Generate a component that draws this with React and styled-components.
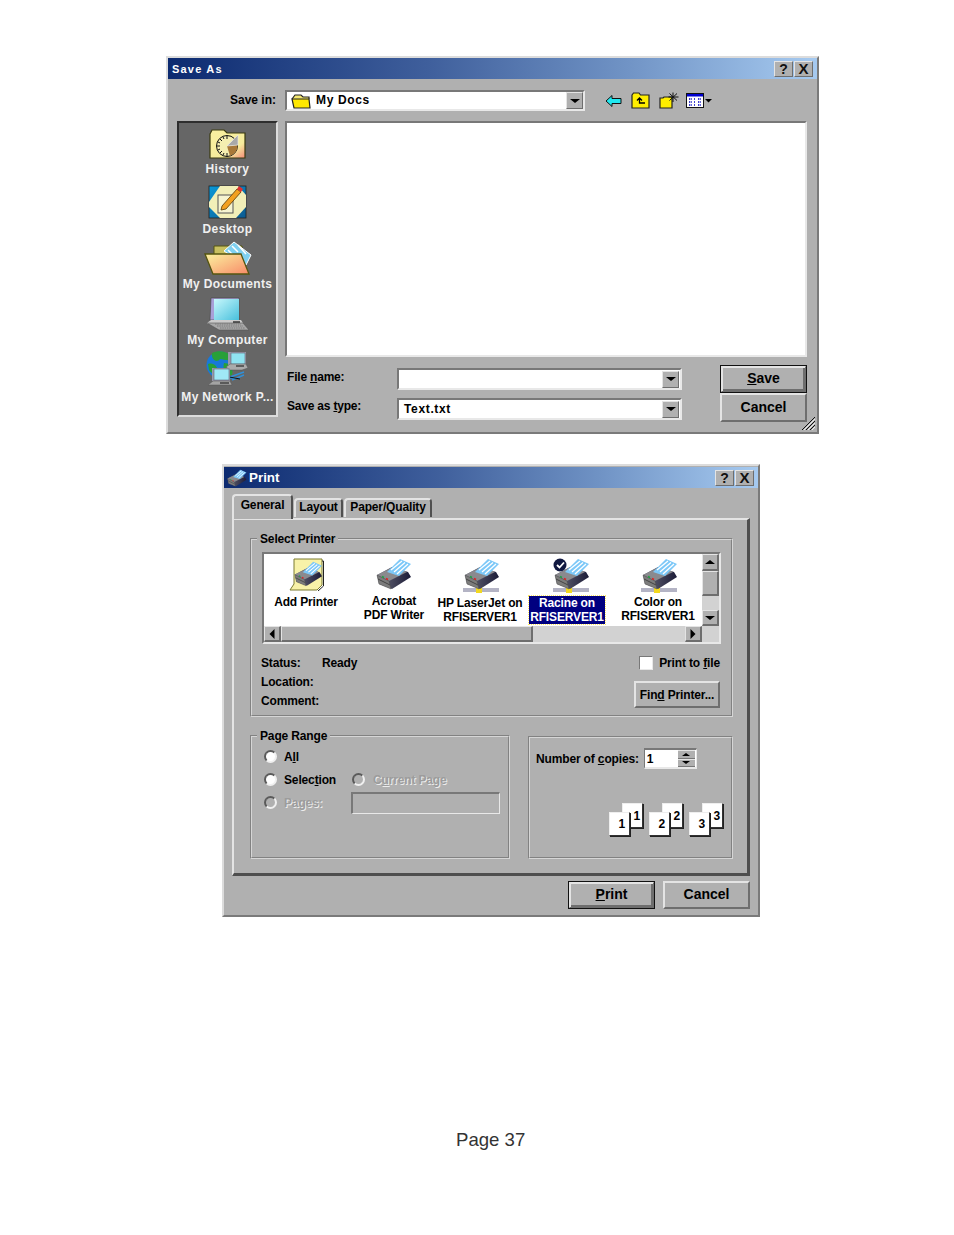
import React from "react";
import styled, { createGlobalStyle } from "styled-components";

const Global = createGlobalStyle`
  html, body { margin: 0; padding: 0; background: #fff; }
  body { font-family: "Liberation Sans", Arial, sans-serif; color: #000; }
`;

const FACE = "#b0b0b0";
const raised = `border-style: solid; border-color: #e4e4e4 #6e6e6e #6e6e6e #e4e4e4;`;
const sunken = `border-style: solid; border-color: #787878 #e8e8e8 #e8e8e8 #787878;`;

const Page = styled.div`
  width: 954px; height: 1235px; padding-top: 56px; box-sizing: border-box;
  display: flex; flex-direction: column; align-items: flex-start;
`;
const Dialog = styled.section`
  position: relative; box-sizing: border-box; flex: none;
  width: ${p => p.$w}px; height: ${p => p.$h}px;
  margin-left: ${p => p.$left}px; margin-top: ${p => p.$top || 0}px;
  background: ${FACE}; border-width: 2px; ${raised}
  border-color: #dcdcdc #7a7a7a #7a7a7a #dcdcdc;
  display: flex; flex-direction: column;
`;
const TitleBar = styled.header`
  height: 21px; flex: none; display: flex; align-items: center; margin-top: ${p => p.$mt || 0}px;
  background: linear-gradient(90deg, #0c2a70 0%, #3f5f9c 40%, #6f92c4 70%, #a6caf0 100%);
  color: #fff; font-weight: bold; padding: 0 4px 0 ${p => p.$pl}px;
`;
const Caption = styled.h1`
  margin: 0; flex: 1; color: #fff; font-weight: bold;
  font-size: ${p => p.$size}px; letter-spacing: ${p => p.$track}px;
`;
const WinBtn = styled.span`
  box-sizing: border-box; width: 19px; height: 16px; margin-left: 1px; border-width: 1px; ${raised}
  background: ${FACE}; color: #111; display: flex; align-items: center; justify-content: center;
  font-size: ${p => p.$size || 14}px; font-weight: bold; line-height: 1;
`;
const SaveBody = styled.div`
  flex: 1; padding: 11px 9px 0 9px; display: flex; flex-direction: column; gap: 10px;
  font-size: 12px; font-weight: bold; letter-spacing: .65px;
`;
const LookRow = styled.div`
  display: flex; align-items: center; height: 21px;
`;
const LookLabel = styled.label`
  width: 99px; text-align: right; margin-right: 9px; padding-bottom: 2px;
  letter-spacing: 0;
`;
const Combo = styled.div`
  box-sizing: border-box; width: ${p => p.$w}px; height: ${p => p.$h}px; border-width: 2px; ${sunken}
  background: #fff; display: flex; align-items: center; padding: 0 ${p => p.$pr || 0}px 0 ${p => p.$pl}px; gap: 5px;
`;
const ComboText = styled.span`flex: 1; padding-bottom: ${p => p.$nudge || 0}px;`;
const ArrowBtn = styled.span`
  box-sizing: border-box; width: 17px; height: 17px; border-width: 1px; flex: none; ${raised}
  background: ${FACE}; display: flex; align-items: center; justify-content: center;
`;
const Tri = styled.i`
  display: block; width: 0; height: 0;
  border-left: ${p => p.$s}px solid transparent; border-right: ${p => p.$s}px solid transparent;
  ${p => p.$up ? `border-bottom: ${p.$s - 1}px solid #000;` : `border-top: ${p.$s - 1}px solid #000;`}
`;
const ToolStrip = styled.div`
  display: flex; align-items: center; margin-left: 20px; height: 18px;
`;
const Tool = styled.svg`display: block; margin-right: ${p => p.$mr || 0}px;`;
const MainRow = styled.div`display: flex; gap: 7px;`;
const Places = styled.nav`
  box-sizing: border-box; width: 101px; height: 296px; flex: none; padding-top: 6px;
  background: #666; border-width: 2px; border-style: solid;
  border-color: #2e2e2e #dcdcdc #dcdcdc #2e2e2e;
  display: flex; flex-direction: column; align-items: center;
`;
const Place = styled.div`
  display: flex; flex-direction: column; align-items: center;
  margin-top: ${p => p.$mt || 0}px; color: #f0f0f0; line-height: 14px; white-space: nowrap;
  letter-spacing: .35px;
  svg { display: block; flex: none; margin-bottom: ${p => p.$lift || 2}px; }
`;
const FileColumn = styled.div`flex: 1; display: flex; flex-direction: column;`;
const FileList = styled.div`
  box-sizing: border-box; width: 522px; height: 236px; background: #fff; border-width: 2px; ${sunken}
`;
const FormRow = styled.div`display: flex; margin-top: 8px;`;
const FormFields = styled.div`
  display: grid; grid-template-columns: 110px 285px; grid-auto-rows: 22px; row-gap: 8px;
  padding: 3px 0 0 2px; align-items: center; letter-spacing: -.2px;
  margin-right: 38px;
`;
const FieldLabel = styled.label`position: relative; top: ${p => p.$up || -2}px;`;
const FormButtons = styled.div`display: flex; flex-direction: column;`;
const PushBtn = styled.button`
  box-sizing: border-box; width: 87px; height: ${p => p.$h || 28}px; background: ${FACE};
  font: bold 14px "Liberation Sans", Arial, sans-serif; color: #000; padding: 0 0 2px; letter-spacing: 0;
  border-width: 2px; ${raised}
  ${p => p.$def && `outline: 1px solid #111; outline-offset: -1px; box-shadow: inset 1px 1px #e4e4e4, inset -2px -2px #6e6e6e;`}
`;
const SmallBtn = styled(PushBtn)`
  font-size: 12px; height: 27px; width: 86px; letter-spacing: -.15px; padding: 0;
`;
const Grip = styled.svg`position: absolute; right: 1px; bottom: 1px; display: block;`;

/* Print dialog */
const TabStrip = styled.div`
  display: flex; align-items: flex-end; height: 30px; padding-left: 8px; flex: none;
  font-size: 12px; font-weight: bold; letter-spacing: -.15px;
`;
const Tab = styled.div`
  box-sizing: border-box; position: relative; height: ${p => p.$on ? 25 : 19}px; width: ${p => p.$w}px;
  margin: 0 1px ${p => p.$on ? -1 : 1}px 0; background: ${FACE}; z-index: ${p => p.$on ? 2 : 1};
  border-width: 2px 2px 0 2px; border-style: solid;
  border-color: #e4e4e4 #505050 #e4e4e4 #e4e4e4; border-radius: 4px 4px 0 0;
  display: flex; align-items: center; justify-content: center;
  padding-bottom: ${p => p.$on ? 6 : 3}px;
`;
const Panel = styled.div`
  box-sizing: border-box; margin: 0 8px; height: 358px; border-style: solid; flex: none;
  border-width: 2px 3px 3px 2px; border-color: #e4e4e4 #4e4e4e #4e4e4e #e4e4e4;
  padding: 12px 14px 0 16px; font-size: 12px; font-weight: bold; letter-spacing: -.15px;
`;
const Group = styled.fieldset`
  box-sizing: border-box; margin: 0; padding: 0; min-width: 0; height: ${p => p.$h}px;
  border: 2px groove #d6d6d6;
`;
const Legend = styled.legend`
  margin-left: 5px; padding: 0 3px; font-size: 12px; line-height: 14px;
`;
const PrinterList = styled.div`
  box-sizing: border-box; width: 459px; height: 92px; margin: 6px 0 0 10px;
  border-width: 2px; ${sunken}; background: #fff;
  display: grid; grid-template-columns: 438px 17px; grid-template-rows: 72px 16px;
`;
const Printers = styled.div`display: flex; overflow: hidden;`;
const PrinterItem = styled.div`
  width: ${p => p.$w}px; flex: none; display: flex; flex-direction: column; align-items: center;
  padding-top: 4px; text-align: center; line-height: 14px; white-space: nowrap;
  svg { display: block; flex: none; margin: 0 0 ${p => p.$gap}px ${p => p.$shift || 0}px; }
`;
const Selected = styled.span`
  background: #000080; color: #fff; outline: 1px dotted #ffe860; padding: 0 1px; display: block;
  position: relative; top: -1px;
`;
const VScroll = styled.div`
  display: flex; flex-direction: column; background: #d2d2d2;
`;
const ScrollBtn = styled.div`
  box-sizing: border-box; width: ${p => p.$w || 17}px; height: ${p => p.$h || 17}px; flex: none; border-width: 1px 2px 2px 1px; ${raised}
  background: ${FACE}; display: flex; align-items: center; justify-content: center;
`;
const VThumb = styled.div`
  box-sizing: border-box; height: 25px; flex: none; border-width: 1px 2px 2px 1px; ${raised} background: ${FACE};
`;
const VTrack = styled.div`flex: 1;`;
const HScroll = styled.div`display: flex; background: #d2d2d2;`;
const HThumb = styled.div`
  box-sizing: border-box; width: 252px; flex: none; border-width: 1px 2px 2px 1px; ${raised} background: ${FACE};
`;
const Corner = styled.div`background: #d2d2d2;`;
const StatusRow = styled.div`display: flex; justify-content: space-between; margin: 9px 11px 0 9px;`;
const Info = styled.dl`
  margin: 0; display: grid; grid-template-columns: 61px auto; grid-auto-rows: 19px; align-items: center;
  dd { margin: 0; }
  dt { white-space: nowrap; }
`;
const Actions = styled.div`display: flex; flex-direction: column; align-items: flex-end;`;
const CheckRow = styled.label`display: flex; align-items: center; gap: 6px; height: 15px; margin: 2px 0 11px;`;
const Check = styled.span`
  box-sizing: border-box; width: 14px; height: 14px; background: #fff; border-width: 1px; ${sunken}
`;
const Lower = styled.div`
  display: grid; grid-template-columns: 260px 205px; column-gap: 18px; margin-top: 12px;
`;
const RangeRow = styled.div`
  display: flex; align-items: center; height: 23px; margin-left: 12px; position: relative;
`;
const RangeStack = styled.div`margin-top: 2px;`;
const Radio = styled.span`
  box-sizing: border-box; width: 13px; height: 13px; flex: none; border-radius: 50%;
  border: 2px solid; border-color: #5a5a5a #f0f0f0 #f0f0f0 #5a5a5a;
  background: ${p => p.$on ? "#fff" : FACE};
`;
const RadioText = styled.span`
  margin-left: ${p => p.$ml || 7}px; min-width: ${p => p.$min || 0}px;
  ${p => p.$off && `color: #9c9c9c; text-shadow: 1px 1px 0 #ececec;`}
`;
const PagesInput = styled.span`
  box-sizing: border-box; width: 149px; height: 22px; margin-left: 29px; ${sunken}
  border-width: 2px 1px 1px 2px; background: ${FACE};
`;
const CopiesBox = styled.div`
  box-sizing: border-box; height: 123px; margin-top: 7px; border: 2px groove #d6d6d6;
  padding: 10px 8px 0 6px; display: flex; flex-direction: column;
`;
const CopiesRow = styled.div`display: flex; align-items: center; gap: 5px; height: 21px;`;
const CopiesInput = styled.div`
  box-sizing: border-box; width: 53px; height: 21px; background: #fff; border-width: 2px 1px 2px 1px; ${sunken}
  display: flex; align-items: center; justify-content: space-between; padding-left: 2px;
`;
const Spin = styled.div`
  width: 17px; height: 17px; display: flex; flex-direction: column; background: #8c8c8c; margin-right: 1px;
`;
const SpinPart = styled.span`
  flex: 1; display: flex; align-items: center; justify-content: center; background: ${FACE};
  border-top: 1px solid #e4e4e4; border-bottom: 1px solid #777;
`;
const Collate = styled.div`display: flex; justify-content: flex-end; gap: 6px; margin-top: 34px;`;
const Pair = styled.div`display: flex; flex-direction: row-reverse; width: 34px; height: 33px;`;
const Sheet = styled.span`
  box-sizing: border-box; width: 21px; height: ${p => p.$front ? 24 : 25}px; flex: none; background: #fff;
  border: 1px solid; border-color: #eee #333 #333 #eee; box-shadow: 1px 1px 0 #222;
  display: flex; align-items: center; justify-content: flex-end;
  padding-right: ${p => p.$front ? 4 : 2}px; font-size: 12px;
  align-self: ${p => p.$front ? "flex-end" : "flex-start"};
  margin-right: ${p => p.$front ? -8 : 0}px; z-index: ${p => p.$front ? 1 : 0};
`;
const Footer = styled.div`display: flex; justify-content: flex-end; gap: 8px; margin: 5px 8px 0 0;`;
const PageNo = styled.footer`
  margin: 212px 0 0 456px; font-size: 18.6px; color: #333; line-height: 22px;
`;

/* Icons */
const MiniFolder = () => (
  <svg width="20" height="16" viewBox="0 0 20 16">
    <path d="M1 6 L4 2 H10 L12 4 H18 V6" fill="#f4e870" stroke="#222" strokeWidth="1.2" />
    <path d="M1 6 H18 L19 15 H3 Z" fill="#ffe800" stroke="#222" strokeWidth="1.2" />
  </svg>
);
const Back = () => (
  <Tool width="17" height="14" viewBox="0 0 17 14" $mr="9">
    <path d="M1 7 L7 1.5 V4.5 H16 V9.5 H7 V12.5 Z" fill="#20e8f0" stroke="#111" strokeWidth="1" />
  </Tool>
);
const UpFolder = () => (
  <Tool width="19" height="17" viewBox="0 0 19 17" $mr="9">
    <path d="M1 3 L2.5 1 H8 L9.5 3 H18 V16 H1 Z" fill="#ffee00" stroke="#222" strokeWidth="1.2" />
    <path d="M6 8.5 L8.5 6 L11 8.5 M8.5 6 V11 H14" fill="none" stroke="#000" strokeWidth="1.3" />
  </Tool>
);
const NewFolder = () => (
  <Tool width="20" height="17" viewBox="0 0 20 17" $mr="7">
    <path d="M1 6 H4 L5 5 H13 V16 H1 Z" fill="#ffee00" stroke="#222" strokeWidth="1.2" />
    <path d="M14 .5 V10 M9.5 5 H19.5 M10.5 1.5 L18 8.5 M18 1.5 L10.5 8.5" stroke="#111" strokeWidth="1" />
  </Tool>
);
const ViewIcon = () => (
  <Tool width="27" height="15" viewBox="0 0 27 15">
    <rect x=".5" y=".5" width="17" height="14" fill="#fff" stroke="#111" />
    <rect x="1" y="1" width="16" height="2.5" fill="#0000d0" />
    <path d="M3 6 H6 M8 6 H9 M12 6 H15 M3 9 H6 M8 9 H9 M12 9 H15 M3 12 H6 M8 12 H9 M12 12 H15" stroke="#0000c0" strokeWidth="1.4" strokeDasharray="1.4 .8" />
    <path d="M19 6 H26 L22.5 9.5 Z" fill="#000" />
  </Tool>
);
const History = () => (
  <svg width="37" height="30" viewBox="0 0 37 30">
    <defs><linearGradient id="hf" x1="0" y1="0" x2="1" y2="1"><stop offset="0" stopColor="#f8f0a0" /><stop offset=".7" stopColor="#f6ec9c" /><stop offset="1" stopColor="#f48a78" /></linearGradient></defs>
    <path d="M1 5 L3 1 H15 L18 4 H36 V29 H1 Z" fill="url(#hf)" stroke="#3a3a10" strokeWidth="1.2" />
    <circle cx="18" cy="17" r="10.5" fill="#f4eeb0" stroke="#111" strokeWidth="1" />
    <path d="M18 17 L28.5 16 A10.5 10.5 0 0 1 21 27 Z" fill="#a87838" />
    <path d="M18 17 L29 6 V16 Z" fill="#a8a8a8" stroke="#eee" strokeWidth=".6" />
    <path d="M18 7 V10 M18 24 V27 M8 17 H11 M11 10 L13 12 M11 24 L13 22 M14 8 L15 10 M9 13 L11 14 M9 21 L11 20 M14 26 L15 24" stroke="#111" strokeWidth="1" />
  </svg>
);
const Desktop = () => (
  <svg width="39" height="34" viewBox="0 0 39 34">
    <defs><linearGradient id="db" x1="0" y1="0" x2="1" y2="1"><stop offset="0" stopColor="#0a98d8" /><stop offset="1" stopColor="#0c5a90" /></linearGradient></defs>
    <rect x="1" y="1" width="37" height="32" fill="url(#db)" stroke="#222" strokeWidth=".8" />
    <path d="M1 17 L12 1 H30 L38 10 V22 L28 33 H12 L1 22 Z" fill="#f2efb8" />
    <rect x="10" y="10" width="15" height="18" fill="#f6f4d0" stroke="#555" />
    <path d="M14 21 L29 4 L33 7 L18 24 L13 25 Z" fill="#f2a020" stroke="#5a3a00" strokeWidth=".8" />
    <path d="M29 4 L31 1 L35 4 L33 7 Z" fill="#e03030" />
  </svg>
);
const Docs = () => (
  <svg width="48" height="34" viewBox="0 0 48 34">
    <defs><linearGradient id="mf" x1="0" y1="0" x2="1" y2="1"><stop offset="0" stopColor="#fbf3a0" /><stop offset="1" stopColor="#f88a68" /></linearGradient></defs>
    <path d="M10 5 H38 V30 H10 Z" fill="#c8c060" stroke="#555510" />
    <path d="M20 10 L30 1 L47 14 L42 24 Z" fill="#7fd0f0" stroke="#fff" />
    <path d="M28 5 L34 11 M34 4 L42 13 M24 9 L30 15" stroke="#fff" strokeWidth="1.5" />
    <path d="M1 13 H37 L45 33 H9 Z" fill="url(#mf)" stroke="#555510" strokeWidth="1.3" />
  </svg>
);
const Computer = () => (
  <svg width="42" height="34" viewBox="0 0 42 34">
    <defs><linearGradient id="sc" x1="0" y1="0" x2="1" y2="1"><stop offset="0" stopColor="#c8f8fc" /><stop offset="1" stopColor="#48c0dc" /></linearGradient></defs>
    <path d="M4 1 H32 V23 H3 Z" fill="#a8a0d8" stroke="#444" strokeWidth=".6" />
    <rect x="7" y="2" width="25" height="21" fill="url(#sc)" />
    <path d="M0 26 L4 23 H34 L36 26 V27 H0 Z" fill="#ccc" />
    <path d="M0 26 L12 33 H42 L36 26 Z" fill="#a8a8a8" stroke="#555" strokeWidth=".6" />
    <path d="M8 27 H34 M10 29 H36 M13 31 H38" stroke="#777" strokeWidth=".9" strokeDasharray="1.5 .8" />
    <path d="M26 25 H33" stroke="#111" strokeWidth="1.2" />
  </svg>
);
const Network = () => (
  <svg width="42" height="37" viewBox="0 0 42 37">
    <circle cx="14" cy="15" r="13.5" fill="#1878d8" />
    <path d="M6 3 C14 -1 24 2 27 9 C22 12 18 9 14 9 C12 13 5 11 6 3 Z M2 14 C8 12 12 17 12 22 C10 26 6 24 3 20 Z M18 13 C24 13 28 18 26 25 C20 27 16 20 18 13 Z" fill="#28a038" />
    <path d="M22 2 H40 V15 H22 Z" fill="#99a" />
    <rect x="25" y="3" width="14" height="11" fill="#90e4f2" stroke="#667" strokeWidth=".6" />
    <path d="M20 17 L24 14 H40 L42 18 L36 20 H24 Z" fill="#aaa" stroke="#555" strokeWidth=".5" />
    <path d="M30 16 H38" stroke="#111" />
    <path d="M24 27 L38 22 M26 30 L38 25 M20 28 H34" stroke="#3090d8" strokeWidth="1.4" />
    <path d="M18 26 L34 29" stroke="#111" strokeWidth="1" />
    <rect x="6" y="18" width="18" height="13" fill="#99a" />
    <rect x="8" y="19" width="15" height="11" fill="#a0e8f6" stroke="#667" strokeWidth=".6" />
    <path d="M2 35 L7 31 H24 L26 35 Z" fill="#a4a4a4" stroke="#555" strokeWidth=".5" />
    <path d="M14 33 H23" stroke="#111" />
  </svg>
);
const PrinterBody = ({ id }) => (
  <>
    <defs>
      <linearGradient id={id} x1="0" y1="0" x2="1" y2="0"><stop offset="0" stopColor="#6a6a78" /><stop offset="1" stopColor="#1c1c38" /></linearGradient>
    </defs>
    <path d="M1 17 L16 9 L32 14 L35 19 L16 31 L3 26 Z" fill={`url(#${id})`} />
    <path d="M1 17 L19 8 L31 14 L13 23 Z" fill="#8a8a8e" />
    <path d="M1 17 L13 23 L15 31 L3 26 Z" fill="#7c7c7c" stroke="#444" strokeWidth=".4" />
    <path d="M2 21 L14 27" stroke="#444" strokeWidth="1" />
    <path d="M6 18.5 L8 19.5" stroke="#20a040" strokeWidth="1.5" />
    <path d="M10 20.5 L12 21.5" stroke="#e02020" strokeWidth="1.5" />
    <path d="M11 14 L24 1 L35 6 L23 18 Z" fill="#7cc8f8" />
    <path d="M15 12 L26 3 M18 14 L29 4.5 M21 16 L32 6" stroke="#fff" strokeWidth="1.3" />
  </>
);
const PlainPrinter = ({ id }) => (
  <svg width="36" height="32" viewBox="0 0 36 32"><PrinterBody id={id} /></svg>
);
const NetPrinter = ({ id, check }) => (
  <svg width="38" height="36" viewBox="-1 0 38 36">
    <path d="M-1 31 H35 M-1 33 H35" stroke="#68688a" strokeWidth="1" />
    <rect x="12" y="29" width="6" height="6" fill="#f2d820" />
    <PrinterBody id={id} />
    {check && <>
      <circle cx="6" cy="7" r="6.5" fill="#101840" />
      <path d="M3 7 L5.5 9.5 L10 4.5" fill="none" stroke="#fff" strokeWidth="1.8" />
    </>}
  </svg>
);
const AddPrinter = () => (
  <svg width="35" height="33" viewBox="0 0 35 33">
    <path d="M5 1 H33 V27 L28 32 H1 L5 26 Z" fill="#f8f2a8" stroke="#7a7a30" />
    <path d="M33 3 H34.5 V28 L29 33" fill="none" stroke="#222" />
    <g transform="translate(5 3) scale(.8)"><PrinterBody id="pa" /></g>
  </svg>
);

export default function App() {
  return (
    <Page>
      <Global />
      <Dialog $w={653} $h={378} $left={166}>
        <TitleBar $pl={4}>
          <Caption $size={11} $track={1.2}>Save As</Caption>
          <WinBtn>?</WinBtn>
          <WinBtn $size={15}>X</WinBtn>
        </TitleBar>
        <SaveBody>
          <LookRow>
            <LookLabel>Save in:</LookLabel>
            <Combo $w={300} $h={21} $pl={4}>
              <MiniFolder />
              <ComboText $nudge={2}>My Docs</ComboText>
              <ArrowBtn><Tri $s={5} /></ArrowBtn>
            </Combo>
            <ToolStrip><Back /><UpFolder /><NewFolder /><ViewIcon /></ToolStrip>
          </LookRow>
          <MainRow>
            <Places>
              <Place $lift={3}><History />History</Place>
              <Place $mt={9} $lift={3}><Desktop />Desktop</Place>
              <Place $mt={5}><Docs />My Documents</Place>
              <Place $mt={6}><Computer />My Computer</Place>
              <Place $mt={3} $lift={3}><Network />My Network P...</Place>
            </Places>
            <FileColumn>
              <FileList />
              <FormRow>
                <FormFields>
                  <FieldLabel>File <u>n</u>ame:</FieldLabel>
                  <Combo $w={285} $h={22} $pl={0} $pr={1}>
                    <ComboText />
                    <ArrowBtn><Tri $s={5} /></ArrowBtn>
                  </Combo>
                  <FieldLabel $up={-3}>Save as <u>t</u>ype:</FieldLabel>
                  <Combo $w={285} $h={22} $pl={5} $pr={1} style={{ letterSpacing: ".65px" }}>
                    <ComboText>Text.txt</ComboText>
                    <ArrowBtn><Tri $s={5} /></ArrowBtn>
                  </Combo>
                </FormFields>
                <FormButtons>
                  <PushBtn $def><u>S</u>ave</PushBtn>
                  <PushBtn $h={29}>Cancel</PushBtn>
                </FormButtons>
              </FormRow>
            </FileColumn>
          </MainRow>
        </SaveBody>
        <Grip width="15" height="15" viewBox="0 0 15 15">
          <path d="M14 1 L1 14 M14 5 L5 14 M14 9 L9 14" stroke="#111" strokeWidth="1" />
          <path d="M14 3 L3 14 M14 7 L7 14 M14 11 L11 14" stroke="#eee" strokeWidth="1" />
        </Grip>
      </Dialog>

      <Dialog $w={538} $h={453} $left={222} $top={30}>
        <TitleBar $pl={3} $mt={1}>
          <svg width="20" height="18" viewBox="0 0 36 32" style={{ marginRight: 2 }}><PrinterBody id="pt" /></svg>
          <Caption $size={13.4} $track={0}>Print</Caption>
          <WinBtn>?</WinBtn>
          <WinBtn $size={15}>X</WinBtn>
        </TitleBar>
        <TabStrip>
          <Tab $on $w={61}>General</Tab>
          <Tab $w={49}>Layout</Tab>
          <Tab $w={88}>Paper/Quality</Tab>
        </TabStrip>
        <Panel>
          <Group $h={185}>
            <Legend>Select Printer</Legend>
            <PrinterList>
              <Printers>
                <PrinterItem $w={84} $gap={4}>
                  <AddPrinter />Add Printer
                </PrinterItem>
                <PrinterItem $w={92} $gap={4}>
                  <PlainPrinter id="p1" />Acrobat<br />PDF Writer
                </PrinterItem>
                <PrinterItem $w={80} $gap={2} $shift={4}>
                  <NetPrinter id="p2" />HP LaserJet on<br />RFISERVER1
                </PrinterItem>
                <PrinterItem $w={94} $gap={3} $shift={9}>
                  <NetPrinter id="p3" check />
                  <Selected>Racine on<br />RFISERVER1</Selected>
                </PrinterItem>
                <PrinterItem $w={88} $gap={1} $shift={4}>
                  <NetPrinter id="p4" />Color on<br />RFISERVER1
                </PrinterItem>
              </Printers>
              <VScroll>
                <ScrollBtn><Tri $up $s={5} /></ScrollBtn>
                <VThumb />
                <VTrack />
                <ScrollBtn $h={16}><Tri $s={5} /></ScrollBtn>
              </VScroll>
              <HScroll>
                <ScrollBtn $h={16} $w={17}><svg width="6" height="10" viewBox="0 0 6 10"><path d="M5.5 0 V10 L.5 5 Z" /></svg></ScrollBtn>
                <HThumb />
                <VTrack />
                <ScrollBtn $h={16} $w={17}><svg width="6" height="10" viewBox="0 0 6 10"><path d="M.5 0 V10 L5.5 5 Z" /></svg></ScrollBtn>
              </HScroll>
              <Corner />
            </PrinterList>
            <StatusRow>
              <Info>
                <dt>Status:</dt><dd>Ready</dd>
                <dt>Location:</dt><dd />
                <dt>Comment:</dt><dd />
              </Info>
              <Actions>
                <CheckRow><Check /><span>Print to <u>f</u>ile</span></CheckRow>
                <SmallBtn>Fin<u>d</u> Printer...</SmallBtn>
              </Actions>
            </StatusRow>
          </Group>
          <Lower>
            <Group $h={130}>
              <Legend>Page Range</Legend>
              <RangeStack>
                <RangeRow><Radio $on /><RadioText>A<u>l</u>l</RadioText></RangeRow>
                <RangeRow>
                  <Radio $on /><RadioText $min={68}>Selec<u>t</u>ion</RadioText>
                  <Radio /><RadioText $off $ml={8}>C<u>u</u>rrent Page</RadioText>
                </RangeRow>
                <RangeRow>
                  <Radio /><RadioText $off $min={38}>Pages:</RadioText>
                  <PagesInput />
                </RangeRow>
              </RangeStack>
            </Group>
            <CopiesBox>
              <CopiesRow>
                <span>Number of <u>c</u>opies:</span>
                <CopiesInput>
                  1
                  <Spin>
                    <SpinPart><Tri $up $s={4} /></SpinPart>
                    <SpinPart><Tri $s={4} /></SpinPart>
                  </Spin>
                </CopiesInput>
              </CopiesRow>
              <Collate>
                {[1, 2, 3].map(n => (
                  <Pair key={n}>
                    <Sheet>{n}</Sheet>
                    <Sheet $front>{n}</Sheet>
                  </Pair>
                ))}
              </Collate>
            </CopiesBox>
          </Lower>
        </Panel>
        <Footer>
          <PushBtn $def>
            <u>P</u>rint
          </PushBtn>
          <PushBtn>Cancel</PushBtn>
        </Footer>
      </Dialog>
      <PageNo>Page 37</PageNo>
    </Page>
  );
}
